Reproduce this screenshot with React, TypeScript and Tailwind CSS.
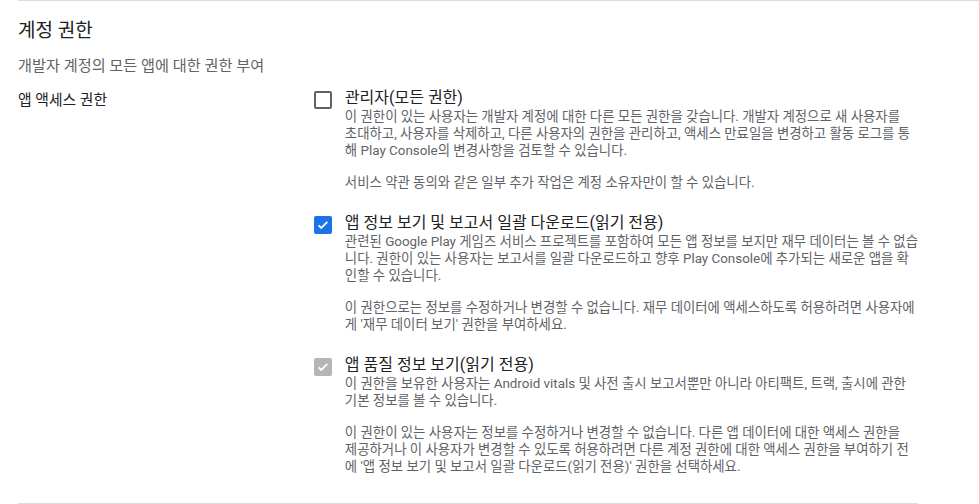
const FONT = "font-['Roboto','Noto_Sans_CJK_KR',sans-serif]";

type Option = {
  title: string;
  state: "off" | "on" | "disabled";
  // each paragraph is kept as the lines it wraps into on the page
  paragraphs: string[][];
};

const options: Option[] = [
  {
    title: "관리자(모든 권한)",
    state: "off",
    paragraphs: [
      [
        "이 권한이 있는 사용자는 개발자 계정에 대한 다른 모든 권한을 갖습니다. 개발자 계정으로 새 사용자를",
        "초대하고, 사용자를 삭제하고, 다른 사용자의 권한을 관리하고, 액세스 만료일을 변경하고 활동 로그를 통",
        "해 Play Console의 변경사항을 검토할 수 있습니다.",
      ],
      ["서비스 약관 동의와 같은 일부 추가 작업은 계정 소유자만이 할 수 있습니다."],
    ],
  },
  {
    title: "앱 정보 보기 및 보고서 일괄 다운로드(읽기 전용)",
    state: "on",
    paragraphs: [
      [
        "관련된 Google Play 게임즈 서비스 프로젝트를 포함하여 모든 앱 정보를 보지만 재무 데이터는 볼 수 없습",
        "니다. 권한이 있는 사용자는 보고서를 일괄 다운로드하고 향후 Play Console에 추가되는 새로운 앱을 확",
        "인할 수 있습니다.",
      ],
      [
        "이 권한으로는 정보를 수정하거나 변경할 수 없습니다. 재무 데이터에 액세스하도록 허용하려면 사용자에",
        "게 '재무 데이터 보기' 권한을 부여하세요.",
      ],
    ],
  },
  {
    title: "앱 품질 정보 보기(읽기 전용)",
    state: "disabled",
    paragraphs: [
      [
        "이 권한을 보유한 사용자는 Android vitals 및 사전 출시 보고서뿐만 아니라 아티팩트, 트랙, 출시에 관한",
        "기본 정보를 볼 수 있습니다.",
      ],
      [
        "이 권한이 있는 사용자는 정보를 수정하거나 변경할 수 없습니다. 다른 앱 데이터에 대한 액세스 권한을",
        "제공하거나 이 사용자가 변경할 수 있도록 허용하려면 다른 계정 권한에 대한 액세스 권한을 부여하기 전",
        "에 '앱 정보 보기 및 보고서 일괄 다운로드(읽기 전용)' 권한을 선택하세요.",
      ],
    ],
  },
];

function Check({ state }: { state: Option["state"] }) {
  if (state === "off") {
    return <div className="w-[18px] h-[18px] rounded-[2px] border-2 border-[#5f6368]" />;
  }
  return (
    <div
      className={
        "w-[18px] h-[18px] rounded-[2px] flex items-center justify-center " +
        (state === "on" ? "bg-[#1a73e8]" : "bg-[#b5b5b5]")
      }
    >
      <svg width="14" height="14" viewBox="0 0 24 24" fill="none">
        <path d="M4.5 12.5l4.5 4.5L19.5 6.5" stroke="white" strokeWidth="3" />
      </svg>
    </div>
  );
}

export default function App() {
  return (
    <div className={`min-h-screen bg-white ${FONT}`}>
      <section className="ml-[18px] border-t border-[#dadce0] pt-[18px]">
        <h2 className="text-[19px] leading-[24px] text-[#202124]">계정 권한</h2>
        <p className="mt-[14px] text-[15.2px] leading-[18px] text-[#5f6368]">개발자 계정의 모든 앱에 대한 권한 부여</p>

        <div className="w-[900px] flex mt-[5px] pb-[28px] border-b border-[#dadce0]">
          <div className="w-[286px] pt-[11px] text-[14.8px] leading-[18px] text-[#202124]">앱 액세스 권한</div>
          <div className="flex-1 flex flex-col gap-[14px]">
            {options.map((o) => (
              <div key={o.title} className="flex">
                <div className="w-[42px] h-[40px] flex items-center justify-center pr-[2px] shrink-0">
                  <Check state={o.state} />
                </div>
                <div className="flex-1 pt-[8px]">
                  <div className="text-[16px] leading-[19px] text-[#202124]">{o.title}</div>
                  <div className="mt-[1px] flex flex-col gap-[15px] text-[13.4px] leading-[17px] text-[#5f6368]">
                    {o.paragraphs.map((lines) => (
                      <p key={lines[0]}>
                        {lines.map((l) => (
                          <span key={l} className="block whitespace-nowrap">
                            {l}
                          </span>
                        ))}
                      </p>
                    ))}
                  </div>
                </div>
              </div>
            ))}
          </div>
        </div>
      </section>
    </div>
  );
}
